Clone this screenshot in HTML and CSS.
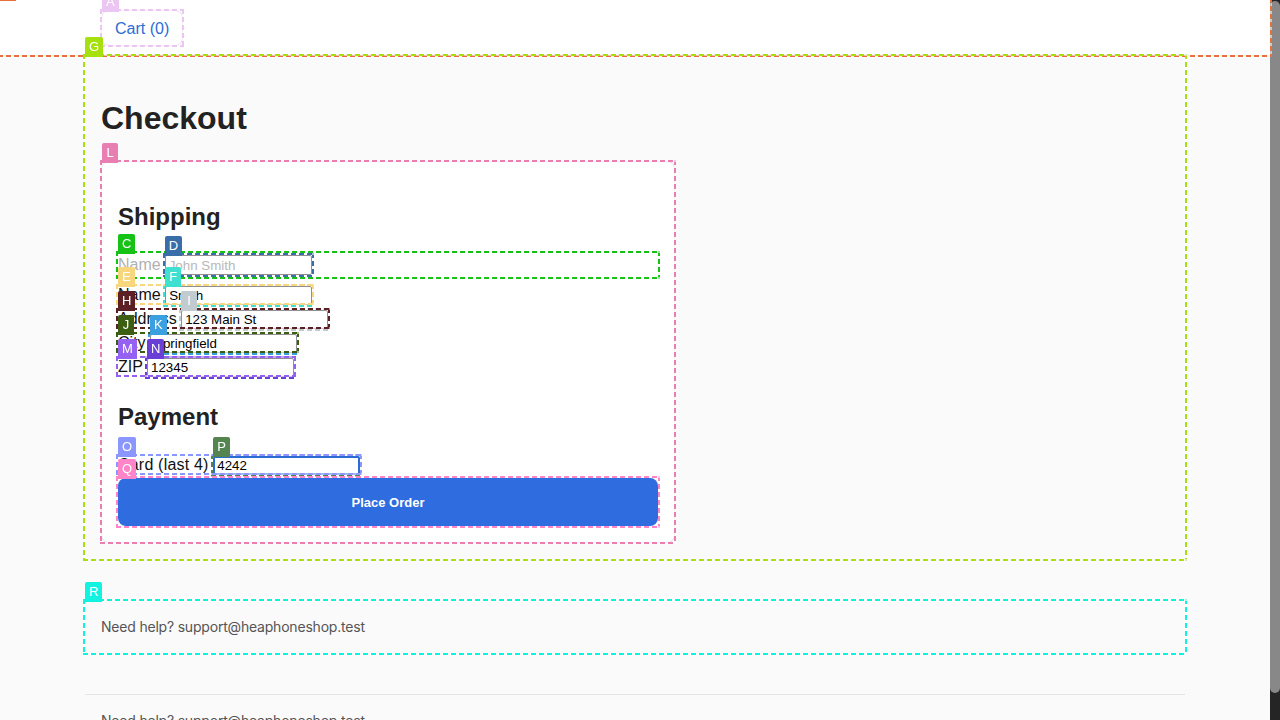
FILE: index.html
```html
<!DOCTYPE html>
<html lang="en">
<head>
<meta charset="utf-8">
<title>Checkout</title>
<link rel="stylesheet" href="styles.css">
</head>
<body>
<div class="page">
  <header class="hdr ov k-hdr">
    <span class="tag"></span>
    <div class="wrap">
      <a class="cart ov k-a" href="#"><span class="tag">A</span>Cart (0)</a>
    </div>
  </header>

  <main class="main ov k-g">
    <span class="tag">G</span>
    <h1>Checkout</h1>
    <section class="card ov k-l">
      <span class="tag">L</span>
      <h2 class="h-ship">Shipping</h2>

      <div class="row-c ov k-c">
        <span class="tag">C</span>
        <span class="muted">Name</span>
        <span class="inp ov k-d"><span class="tag">D</span><input class="tall" type="text" placeholder="John Smith"></span>
      </div>

      <div class="line"><label class="ov k-e"><span class="tag">E</span>Name <span class="inp ov k-f"><span class="tag">F</span><input type="text" value="Smith"></span></label></div>
      <div class="line"><label class="ov k-h"><span class="tag">H</span>Address <span class="inp ov k-i"><span class="tag">I</span><input type="text" value="123 Main St"></span></label></div>
      <div class="line"><label class="ov k-j"><span class="tag">J</span>City <span class="inp ov k-k"><span class="tag">K</span><input type="text" value="Springfield"></span></label></div>
      <div class="line"><label class="ov k-m"><span class="tag">M</span>ZIP <span class="inp ov k-n"><span class="tag">N</span><input type="text" value="12345"></span></label></div>

      <h2 class="h-pay">Payment</h2>
      <div class="line"><label class="ov k-o lbl-card"><span class="tag">O</span>Card (last 4) <span class="inp ov k-p"><span class="tag">P</span><input class="focus" type="text" value="4242"></span></label></div>

      <div class="btn-wrap ov k-q">
        <span class="tag">Q</span>
        <button class="btn" type="button">Place Order</button>
      </div>
    </section>
  </main>

  <section class="help ov k-r">
    <span class="tag">R</span>
    Need help? support@heaphoneshop.test
  </section>

  <footer class="foot">Need help? support@heaphoneshop.test</footer>
</div>

<div class="sb"><div class="sb-thumb"></div></div>
</body>
</html>
```

FILE: styles.css
```css
html, body {
  overflow: hidden;
}

body {
  margin: 0;
  background: #fafafa;
  color: #222;
  font-family: "Liberation Sans", Arial, sans-serif;
}

.page {
  width: 1270px;
}

/* ---------- overlay boxes ---------- */
.ov {
  position: relative;
}

.ov::after {
  content: "";
  position: absolute;
  top: -2px;
  right: -2px;
  bottom: -2px;
  left: -2px;
  pointer-events: none;
  z-index: 1;
  background:
    repeating-linear-gradient(90deg, var(--c) 0 5px, rgba(255,255,255,0.55) 5px 8px) top / 100% 2px no-repeat,
    repeating-linear-gradient(90deg, var(--c) 0 5px, rgba(255,255,255,0.55) 5px 8px) bottom / 100% 2px no-repeat,
    repeating-linear-gradient(180deg, var(--c) 0 5px, rgba(255,255,255,0.55) 5px 8px) left / 2px 100% no-repeat,
    repeating-linear-gradient(180deg, var(--c) 0 5px, rgba(255,255,255,0.55) 5px 8px) right / 2px 100% no-repeat;
}

.tag {
  position: absolute;
  left: 0;
  top: -19px;
  z-index: 2;
  height: 20px;
  min-width: 8px;
  padding: 0 4px;
  background: var(--c);
  color: #fff;
  font: 13px/20px "Liberation Sans", Arial, sans-serif;
  border-radius: 2px 2px 0 0;
  text-align: center;
}

.k-hdr { --c: #e8703a; }
.k-a { --c: #ebc6f2; }
.k-g { --c: #a6e00e; }
.k-l { --c: #e87fb2; }
.k-c { --c: #17c217; }
.k-d { --c: #3a6ea8; }
.k-e { --c: #f7d67e; }
.k-f { --c: #3fe0d0; }
.k-h { --c: #5b1f24; }
.k-i { --c: #c2cbcf; }
.k-j { --c: #3b5e12; }
.k-k { --c: #3aa0e0; }
.k-m { --c: #9461f0; }
.k-n { --c: #6a3fd6; }
.k-o { --c: #8c96ff; }
.k-p { --c: #548550; }
.k-q { --c: #ff85c8; }
.k-r { --c: #12f2e0; }

/* ---------- header ---------- */
.hdr {
  background: #fff;
  border-bottom: 1px solid #e6e6e6;
  padding: 10px 0 9px;
}

.wrap {
  width: 1100px;
  margin: 0 auto;
  padding: 0 16px;
  box-sizing: border-box;
}

.cart {
  display: inline-block;
  padding: 9px 13px 7px;
  border: 1px solid #e3e3e3;
  border-radius: 8px;
  background: #fff;
  color: #2b6cd4;
  font-size: 16px;
  line-height: 18px;
  text-decoration: none;
}

/* ---------- main ---------- */
.main {
  width: 1100px;
  margin: 0 auto;
  box-sizing: border-box;
  padding: 24px 16px 16px;
}

h1 {
  font-size: 32px;
  font-weight: 700;
  line-height: normal;
  margin: 20px 0 24px;
  color: #222;
}

.card {
  width: 574px;
  box-sizing: border-box;
  background: #fff;
  border: 1px solid #e6e6e6;
  border-radius: 8px;
  padding: 16px;
}

.card h2 {
  font-size: 24px;
  font-weight: 700;
  line-height: normal;
  color: #222;
}

.h-ship {
  margin: 25px 0 22px;
}

.h-pay {
  margin: 24px 0 22px;
}

.row-c {
  height: 24px;
  display: flex;
  align-items: center;
  gap: 4px;
  font-size: 16px;
  margin-bottom: 6px;
}

.muted {
  color: #b0b0b0;
}

.line {
  height: 24px;
  line-height: 24px;
  font-size: 16px;
  color: #111;
}

.lbl-card {
  letter-spacing: 0.2px;
}

.inp {
  display: inline-flex;
  vertical-align: baseline;
  line-height: normal;
  letter-spacing: 0;
}

input {
  width: 147px;
  height: 19px;
  box-sizing: border-box;
  margin: 0;
  padding: 1px 3px;
  border: 1px solid #909090;
  border-radius: 2px;
  background: #fff;
  color: #000;
  font: 13.333px "Liberation Sans", Arial, sans-serif;
  outline: none;
}

input.tall {
  height: 20px;
}

input::placeholder {
  color: #b8b8b8;
}

input.focus {
  border: 2px solid #2b6cd4;
  padding: 0 2px;
}

.btn-wrap {
  margin-top: 1px;
}

.btn {
  display: block;
  width: 100%;
  height: 48px;
  border: 0;
  border-radius: 8px;
  background: #2e6cdf;
  color: #fff;
  font: 700 13px "Liberation Sans", Arial, sans-serif;
  cursor: pointer;
}

/* ---------- help & footer ---------- */
.help {
  width: 1100px;
  margin: 42px auto 0;
  box-sizing: border-box;
  padding: 16px;
  font: 14px/20px Inter, "Liberation Sans", sans-serif;
  letter-spacing: -0.2px;
  color: #555;
}

.foot {
  width: 1100px;
  margin: 41px auto 0;
  box-sizing: border-box;
  border-top: 1px solid #e5e5e5;
  padding: 16px;
  font: 14px/20px Inter, "Liberation Sans", sans-serif;
  letter-spacing: -0.2px;
  color: #555;
}

/* ---------- fake scrollbar ---------- */
.sb {
  position: fixed;
  top: 0;
  right: 0;
  width: 10px;
  height: 720px;
  background: #252525;
}

.sb-thumb {
  margin-top: 1px;
  height: 692px;
  background: #888;
  border-radius: 5px;
}
```
